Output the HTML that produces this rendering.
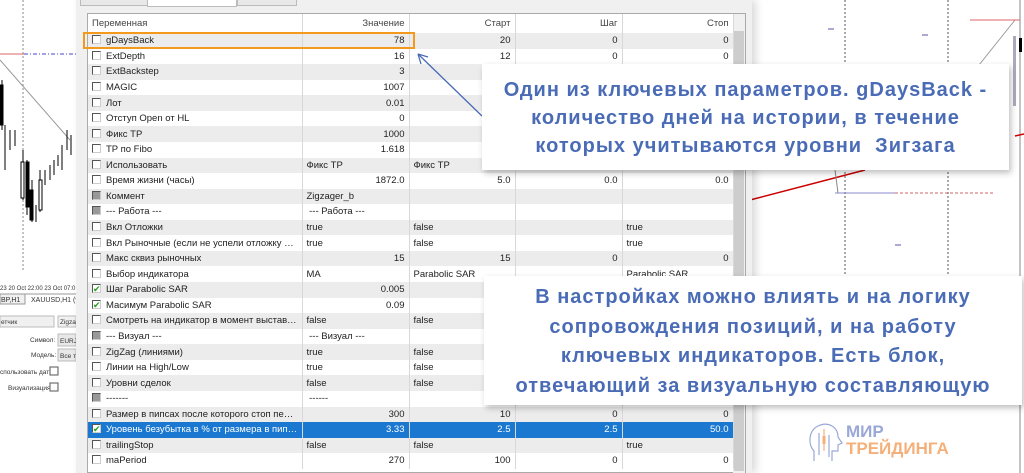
<!DOCTYPE html>
<html><head><meta charset="utf-8">
<style>
*{margin:0;padding:0;box-sizing:border-box}
body{width:1024px;height:473px;overflow:hidden;position:relative;background:#fff;font-family:"Liberation Sans",sans-serif}
.abs{position:absolute}
#dlg{left:76px;top:0;width:676px;height:473px;background:#f0f0f0;box-shadow:4px 0 8px rgba(0,0,0,.15)}
table{position:absolute;left:88px;top:14px;width:645px;border-collapse:collapse;table-layout:fixed;font-size:9.5px;color:#222}
td{height:15.57px;border-right:1px solid #d8d8d8;padding:0 4px;white-space:nowrap;overflow:hidden;text-overflow:ellipsis;line-height:15px}
tr:nth-child(odd) td{background:#fff}
tr:nth-child(even) td{background:#ececec}
tr.h td{background:#fff;height:19px;color:#444}
tr.sel td{background:#1a78d0;color:#fff}
td.r{text-align:right}
.cb{display:inline-block;width:9px;height:9px;border:1px solid #555;border-right-color:#ccc;border-bottom-color:#ccc;background:#fff;vertical-align:-1px;margin-right:5px;position:relative}
.cb.g{background:#999}
.cb.c::after{content:"✔";position:absolute;left:0;top:-3px;font-size:9px;color:#1a9c1a}
.call{position:absolute;background:#fff;box-shadow:2px 3px 6px rgba(0,0,0,.25);color:#4a6bb6;font-weight:bold;font-size:20px;text-align:center;letter-spacing:1px;white-space:nowrap}
</style></head><body>
<svg class="abs" style="left:0;top:0" width="76" height="473">
<line x1="23" y1="0" x2="23" y2="270" stroke="#888" stroke-dasharray="2,2"/>
<line x1="0" y1="54" x2="24" y2="54" stroke="#d66"/>
<line x1="24" y1="54" x2="76" y2="54" stroke="#44c" stroke-dasharray="4,2,1,2"/>
<line x1="0" y1="60" x2="70" y2="140" stroke="#999"/>
<g stroke="#000">
<line x1="2" y1="80" x2="2" y2="130"/><rect x="0" y="85" width="3" height="40"/>
<line x1="5" y1="125" x2="5" y2="170"/><line x1="10" y1="130" x2="10" y2="150"/><line x1="15" y1="130" x2="15" y2="146"/>
<line x1="23" y1="150" x2="23" y2="200"/><rect x="21" y="162" width="3" height="36" fill="#fff"/>
<line x1="27" y1="160" x2="27" y2="215"/><rect x="26" y="162" width="3" height="45"/>
<line x1="32" y1="180" x2="32" y2="222"/><rect x="30" y="190" width="3" height="30"/>
<line x1="36" y1="205" x2="36" y2="222"/>
<line x1="40" y1="170" x2="40" y2="212"/><rect x="39" y="180" width="3" height="30" fill="#fff"/>
<line x1="45" y1="170" x2="45" y2="185"/><line x1="50" y1="165" x2="50" y2="180"/><line x1="54" y1="160" x2="54" y2="175"/>
<line x1="58" y1="155" x2="58" y2="166"/><line x1="62" y1="145" x2="62" y2="170"/><line x1="67" y1="130" x2="67" y2="150"/><line x1="71" y1="135" x2="71" y2="155"/>
</g>
<rect x="0" y="272" width="76" height="201" fill="#fff"/>
<text x="0" y="290" font-size="6" fill="#333" font-family="Liberation Sans">23  20 Oct 22:00  23 Oct 07:0</text>
<line x1="0" y1="294" x2="76" y2="294" stroke="#999"/>
<rect x="0" y="294" width="25" height="10" fill="#f0f0f0" stroke="#999"/>
<text x="1" y="302" font-size="7" fill="#333" font-family="Liberation Sans">BP,H1</text>
<text x="31" y="302" font-size="7" fill="#333" font-family="Liberation Sans">XAUUSD,H1 (v</text>
<rect x="0" y="316" width="54" height="11" fill="#f0f0f0" stroke="#bbb"/>
<text x="1" y="324" font-size="6.5" fill="#333" font-family="Liberation Sans">етчик</text>
<rect x="58" y="316" width="18" height="11" fill="#f0f0f0" stroke="#bbb"/>
<text x="60" y="324" font-size="6.5" fill="#333" font-family="Liberation Sans">Zigza</text>
<text x="30" y="342" font-size="6.5" fill="#333" font-family="Liberation Sans">Символ:</text>
<rect x="58" y="334" width="18" height="12" fill="#e8e8e8" stroke="#bbb"/>
<text x="60" y="343" font-size="6.5" fill="#333" font-family="Liberation Sans">EURJ</text>
<text x="31" y="357" font-size="6.5" fill="#333" font-family="Liberation Sans">Модель:</text>
<rect x="58" y="349" width="18" height="12" fill="#e8e8e8" stroke="#bbb"/>
<text x="60" y="358" font-size="6.5" fill="#333" font-family="Liberation Sans">Все т</text>
<text x="0" y="374" font-size="6.5" fill="#333" font-family="Liberation Sans">спользовать дату</text>
<rect x="50" y="367" width="8" height="8" fill="#fff" stroke="#555"/>
<text x="8" y="390" font-size="6.5" fill="#333" font-family="Liberation Sans">Визуализация</text>
<rect x="50" y="383" width="8" height="8" fill="#fff" stroke="#555"/>
</svg>
<svg class="abs" style="left:745px;top:0" width="279" height="473">
<line x1="100" y1="0" x2="100" y2="280" stroke="#555" stroke-dasharray="2,2"/>
<line x1="203" y1="0" x2="203" y2="280" stroke="#555" stroke-dasharray="2,2"/>
<line x1="275" y1="0" x2="275" y2="473" stroke="#888"/>
<line x1="270" y1="20" x2="230" y2="70" stroke="#999"/>
<line x1="225" y1="20" x2="275" y2="20" stroke="#d66"/>
<rect x="268" y="36" width="3" height="70" fill="#aab"/>
<rect x="274" y="38" width="3" height="14" fill="#000"/>
<line x1="5" y1="200" x2="120" y2="170" stroke="#c00" stroke-width="1.5"/>
<line x1="270" y1="136" x2="279" y2="134" stroke="#c00" stroke-width="1.5"/>
<line x1="90" y1="193" x2="150" y2="193" stroke="#88c"/>
<line x1="150" y1="193" x2="250" y2="193" stroke="#c66" stroke-dasharray="3,2"/>
<line x1="90" y1="170" x2="93" y2="193" stroke="#888"/>
<line x1="83" y1="29" x2="89" y2="29" stroke="#55a"/>
<line x1="177" y1="35" x2="183" y2="35" stroke="#55a"/>
<line x1="150" y1="245" x2="156" y2="245" stroke="#55a"/>
</svg>
<div id="dlg" class="abs"></div>
<div class="abs" style="left:80px;top:0;width:72px;height:6px;border:1px solid #bbb;border-top:none;background:#e8e8e8"></div>
<div class="abs" style="left:147px;top:0;width:90px;height:7px;border:1px solid #bbb;border-top:none;background:#fff"></div>
<div class="abs" style="left:237px;top:0;width:60px;height:6px;border:1px solid #bbb;border-top:none;background:#e8e8e8"></div>
<div class="abs" style="left:87px;top:13px;width:659px;height:460px;border:1px solid #aaa;background:#fff"></div>
<div class="abs" style="left:733px;top:14px;width:12px;height:459px;background:#f0f0f0"></div>
<div class="abs" style="left:734px;top:31px;width:10px;height:440px;background:#cdcdcd"></div>
<table>
<colgroup><col style="width:214px"><col style="width:107px"><col style="width:106px"><col style="width:107px"><col style="width:111px"></colgroup>
<tr class="h"><td>Переменная</td><td class="r">Значение</td><td class="r">Старт</td><td class="r">Шаг</td><td class="r">Стоп</td></tr>
<tr><td><span class="cb"></span>gDaysBack</td><td class="r">78</td><td class="r">20</td><td class="r">0</td><td class="r">0</td></tr>
<tr><td><span class="cb"></span>ExtDepth</td><td class="r">16</td><td class="r">12</td><td class="r">0</td><td class="r">0</td></tr>
<tr><td><span class="cb"></span>ExtBackstep</td><td class="r">3</td><td></td><td></td><td></td></tr>
<tr><td><span class="cb"></span>MAGIC</td><td class="r">1007</td><td></td><td></td><td></td></tr>
<tr><td><span class="cb"></span>Лот</td><td class="r">0.01</td><td></td><td></td><td></td></tr>
<tr><td><span class="cb"></span>Отступ Open от HL</td><td class="r">0</td><td></td><td></td><td></td></tr>
<tr><td><span class="cb"></span>Фикс TP</td><td class="r">1000</td><td></td><td></td><td></td></tr>
<tr><td><span class="cb"></span>TP по Fibo</td><td class="r">1.618</td><td></td><td></td><td></td></tr>
<tr><td><span class="cb"></span>Использовать</td><td>Фикс TP</td><td>Фикс TP</td><td></td><td></td></tr>
<tr><td><span class="cb"></span>Время жизни (часы)</td><td class="r">1872.0</td><td class="r">5.0</td><td class="r">0.0</td><td class="r">0.0</td></tr>
<tr><td><span class="cb g"></span>Коммент</td><td>Zigzager_b</td><td></td><td></td><td></td></tr>
<tr><td><span class="cb g"></span>--- Работа ---</td><td>&nbsp;--- Работа ---</td><td></td><td></td><td></td></tr>
<tr><td><span class="cb"></span>Вкл Отложки</td><td>true</td><td>false</td><td></td><td>true</td></tr>
<tr><td><span class="cb"></span>Вкл Рыночные (если не успели отложку поста...</td><td>true</td><td>false</td><td></td><td>true</td></tr>
<tr><td><span class="cb"></span>Макс сквиз рыночных</td><td class="r">15</td><td class="r">15</td><td class="r">0</td><td class="r">0</td></tr>
<tr><td><span class="cb"></span>Выбор индикатора</td><td>MA</td><td>Parabolic SAR</td><td></td><td>Parabolic SAR</td></tr>
<tr><td><span class="cb c"></span>Шаг Parabolic SAR</td><td class="r">0.005</td><td></td><td></td><td></td></tr>
<tr><td><span class="cb c"></span>Масимум Parabolic SAR</td><td class="r">0.09</td><td></td><td></td><td></td></tr>
<tr><td><span class="cb"></span>Смотреть на индикатор в момент выставлени...</td><td>false</td><td>false</td><td></td><td></td></tr>
<tr><td><span class="cb g"></span>--- Визуал ---</td><td>&nbsp;--- Визуал ---</td><td></td><td></td><td></td></tr>
<tr><td><span class="cb"></span>ZigZag (линиями)</td><td>true</td><td>false</td><td></td><td></td></tr>
<tr><td><span class="cb"></span>Линии на High/Low</td><td>true</td><td>false</td><td></td><td></td></tr>
<tr><td><span class="cb"></span>Уровни сделок</td><td>false</td><td>false</td><td></td><td></td></tr>
<tr><td><span class="cb g"></span>-------</td><td>&nbsp;------</td><td></td><td></td><td></td></tr>
<tr><td><span class="cb"></span>Размер в пипсах после которого стоп перено...</td><td class="r">300</td><td class="r">10</td><td class="r">0</td><td class="r">0</td></tr>
<tr class="sel"><td><span class="cb c"></span>Уровень безубытка в % от размера в пипсах ...</td><td class="r">3.33</td><td class="r">2.5</td><td class="r">2.5</td><td class="r">50.0</td></tr>
<tr><td><span class="cb"></span>trailingStop</td><td>false</td><td>false</td><td></td><td>true</td></tr>
<tr><td><span class="cb"></span>maPeriod</td><td class="r">270</td><td class="r">100</td><td class="r">0</td><td class="r">0</td></tr>
</table>
<div class="abs" style="left:83px;top:32px;width:332px;height:17px;border:2px solid #f39a1e"></div>
<svg class="abs" style="left:410px;top:50px" width="80" height="70"><line x1="8" y1="4" x2="72" y2="66" stroke="#4a6bb6" stroke-width="1.3"/><path d="M8 4 L18 7 M8 4 L11 14" stroke="#4a6bb6" stroke-width="1.3" fill="none"/></svg>
<div class="call" style="left:482px;top:64px;width:527px;height:106px;padding-top:12px;line-height:28px">Один из ключевых параметров. gDaysBack -<br>количество дней на истории, в течение<br>которых учитываются уровни&nbsp; Зигзага</div>
<div class="call" style="left:484px;top:276px;width:538px;height:129px;padding-top:7px;line-height:29.5px">В настройках можно влиять и на логику<br>сопровождения позиций, и на работу<br>ключевых индикаторов. Есть блок,<br>отвечающий за визуальную составляющую</div>
<svg class="abs" style="left:806px;top:421px" width="40" height="44" fill="none" stroke="#9aa8d8" stroke-width="1.2"><path d="M8 40 V30 C2 24 2 10 12 5 C22 0 32 6 32 16 L36 22 L32 24 V30 L26 30 V40"/><line x1="13" y1="12" x2="13" y2="34" stroke="#9aa8d8"/><line x1="18" y1="8" x2="18" y2="30" stroke="#f3b27a"/><line x1="23" y1="14" x2="23" y2="36" stroke="#9aa8d8"/><rect x="16.5" y="15" width="3" height="8" fill="#f3b27a" stroke="none"/></svg>
<div class="abs" style="left:846px;top:423px;font-weight:bold;font-size:17px;line-height:18px;color:#9aa8d8">МИР</div>
<div class="abs" style="left:846px;top:440px;font-weight:bold;font-size:17px;line-height:18px;color:#f5b07a">ТРЕЙДИНГА</div>
</body></html>
